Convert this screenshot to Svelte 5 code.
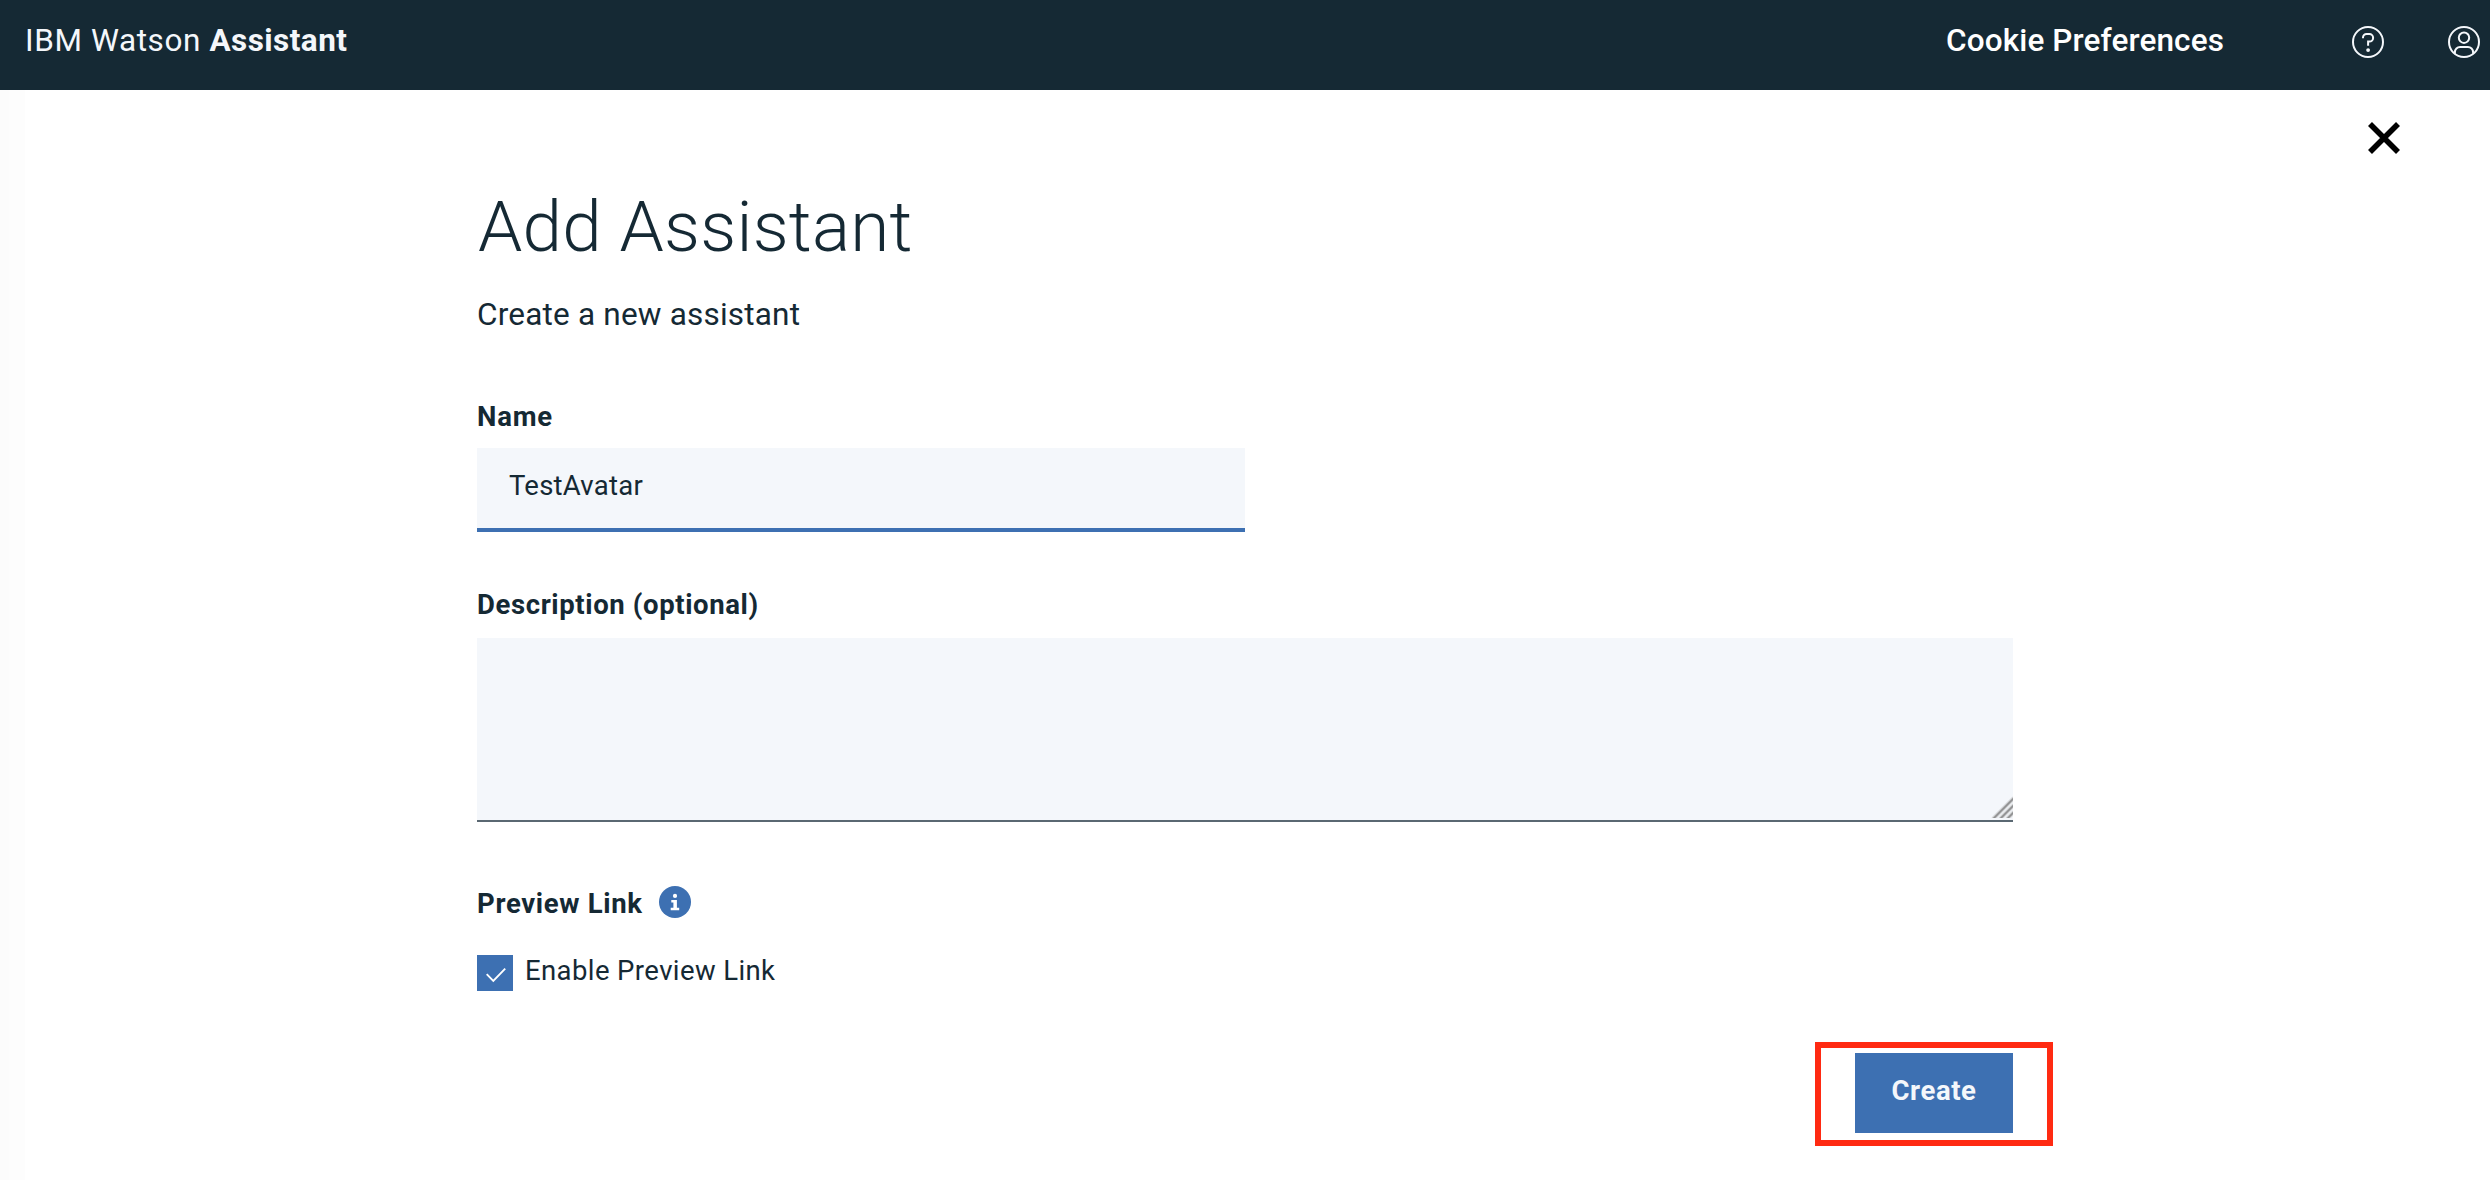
<script>
  let name = $state('TestAvatar');
  let description = $state('');
  let preview = $state(true);
</script>

<div class="page">
  <header>
    <div class="brand"><span class="vendor">IBM Watson&nbsp;</span><strong>Assistant</strong></div>
    <nav>
      <a class="cookies" href="#cookies">Cookie Preferences</a>
      <svg class="help" viewBox="0 0 32 32" width="32" height="32" fill="none" stroke="#f4f7fb" stroke-width="2">
        <circle cx="16" cy="16" r="15" />
        <path d="M11 12.3V11.6A3.6 3.6 0 0 1 14.6 8H17.4A3.7 3.7 0 0 1 21.1 11.7V11.9A3.7 3.7 0 0 1 17.4 15.6H16.1V19.8" />
        <circle cx="16.1" cy="24.1" r="1.9" fill="#f4f7fb" stroke="none" />
      </svg>
      <svg class="user" viewBox="0 0 32 32" width="32" height="32" fill="none" stroke="#f4f7fb" stroke-width="2">
        <circle cx="16" cy="16" r="15" />
        <circle cx="16" cy="11.7" r="5.2" />
        <path d="M6.9 27.8V26.2A5.2 5.2 0 0 1 12.1 21H19.9A5.2 5.2 0 0 1 25.1 26.2V27.8" />
      </svg>
    </nav>
  </header>

  <div class="body">
    <div class="rail"></div>
    <main>
      <div class="closebar">
        <button class="close" aria-label="Close">
          <svg viewBox="0 0 32 32" width="32" height="32" stroke="#000" stroke-width="5.6">
            <path d="M2 2L30 30M30 2L2 30" />
          </svg>
        </button>
      </div>

      <form onsubmit={(e) => e.preventDefault()}>
        <h1>Add Assistant</h1>
        <p class="sub">Create a new assistant</p>

        <label class="lbl" for="name">Name</label>
        <input id="name" class="text" type="text" bind:value={name} />

        <label class="lbl desc" for="description">Description (optional)</label>
        <div class="area">
          <textarea id="description" bind:value={description}></textarea>
          <svg class="grip" viewBox="0 0 22 22" width="22" height="22" fill="none">
            <path d="M2 23L23 2M9 23L23 9M16 23L23 16" stroke="#d2d3d5" stroke-width="4" />
            <path d="M2 23L23 2M9 23L23 9M16 23L23 16" stroke="#8f9091" stroke-width="1.7" />
          </svg>
        </div>

        <div class="heading">
          <span class="lbl link">Preview Link</span>
          <svg viewBox="0 0 32 32" width="32" height="32">
            <circle cx="16" cy="16" r="16" fill="#3d70b2" />
            <circle cx="16" cy="9.9" r="2.1" fill="#fff" />
            <path d="M12.3 14H17.9V21.8H20.2V24.2H11.7V21.8H14.4V16.4H12.3Z" fill="#fff" />
          </svg>
        </div>

        <button type="button" class="check" role="checkbox" aria-checked={preview} onclick={() => (preview = !preview)}>
          <span class="box">
            {#if preview}
              <svg viewBox="0 0 36 36" width="36" height="36" fill="none" stroke="#fff" stroke-width="1.9">
                <path d="M9.7 19.2L16.3 25.9L28.2 13.7" />
              </svg>
            {/if}
          </span>
          <span class="checklabel">Enable Preview Link</span>
        </button>

        <div class="actions">
          <div class="highlight"><button class="create">Create</button></div>
        </div>
      </form>
    </main>
  </div>
</div>

<style>
  :global(body) {
    overflow: hidden;
    background: #fff;
  }
  .page {
    height: 1180px;
    display: flex;
    flex-direction: column;
    font-family: Roboto, "Liberation Sans", sans-serif;
    font-size: 27.5px;
    color: #152934;
  }
  header {
    height: 90px;
    flex: none;
    box-sizing: border-box;
    padding: 0 10px 0 25px;
    display: flex;
    justify-content: space-between;
    align-items: flex-start;
    background: #152934;
    color: #f4f7fb;
    font-size: 31.5px;
    line-height: 82px;
  }
  .brand {
    display: flex;
    white-space: nowrap;
  }
  .vendor {
    letter-spacing: 0.6px;
  }
  .brand strong {
    font-weight: 700;
    letter-spacing: 0.45px;
  }
  nav {
    display: flex;
    align-items: flex-start;
  }
  .cookies {
    color: #fff;
    text-decoration: none;
    font-weight: 500;
    letter-spacing: 0.13px;
    margin-right: 128px;
  }
  .help,
  .user {
    margin-top: 26px;
  }
  .user {
    margin-left: 64px;
  }
  .body {
    flex: 1;
    display: flex;
  }
  .rail {
    width: 25px;
    background: linear-gradient(to right, #fcfcfc 9px, #fdfdfd 9px);
  }
  main {
    flex: 1;
  }
  .closebar {
    display: flex;
    justify-content: flex-end;
    padding: 32px 90px 0 0;
  }
  button {
    border: 0;
    padding: 0;
    background: none;
    font: inherit;
    color: inherit;
  }
  .close {
    display: flex;
  }
  form {
    width: 1536px;
    margin: 33px 0 0 452px;
    display: flex;
    flex-direction: column;
  }
  h1 {
    margin: 0;
    padding-left: 1px;
    font-size: 71px;
    font-weight: 300;
    line-height: 80px;
    letter-spacing: 0.22px;
  }
  .sub {
    margin: 28px 0 0;
    font-size: 31.5px;
    line-height: 40px;
    letter-spacing: 0.2px;
  }
  .lbl {
    margin-top: 62px;
    line-height: 40px;
    font-weight: 700;
    letter-spacing: 0.8px;
  }
  .text {
    width: 768px;
    height: 84px;
    box-sizing: border-box;
    margin-top: 11px;
    padding: 0 32px 6px;
    border: 0;
    border-bottom: 4px solid #3d70b2;
    border-radius: 0;
    background: #f4f7fb;
    color: inherit;
    font: inherit;
    letter-spacing: 0.25px;
    outline: none;
  }
  .desc {
    margin-top: 53px;
    letter-spacing: 0.62px;
  }
  .area {
    position: relative;
    margin-top: 13px;
    height: 184px;
    display: flex;
  }
  textarea {
    flex: 1;
    box-sizing: border-box;
    padding: 28px 32px;
    border: 0;
    border-bottom: 2px solid #5a6872;
    border-radius: 0;
    background: #f4f7fb;
    resize: none;
    outline: none;
    font: inherit;
    color: inherit;
  }
  .grip {
    position: absolute;
    right: 0;
    bottom: 4px;
  }
  .heading {
    margin-top: 62px;
    display: flex;
    align-items: flex-start;
  }
  .heading svg {
    margin-top: 2px;
  }
  .link {
    width: 182px;
    margin-top: 0;
    letter-spacing: 0.68px;
  }
  .check {
    margin-top: 26px;
    display: flex;
    gap: 12px;
    text-align: left;
  }
  .box {
    width: 36px;
    height: 36px;
    margin-top: 5px;
    background: #3d70b2;
  }
  .box svg {
    display: block;
  }
  .checklabel {
    height: 41px;
    line-height: 42px;
    letter-spacing: 0.4px;
  }
  .actions {
    margin-top: 62px;
    display: flex;
    justify-content: flex-end;
  }
  .highlight {
    position: relative;
    display: flex;
  }
  .highlight::after {
    content: '';
    position: absolute;
    inset: -11px -40px -13px;
    border: 6px solid #ff2a12;
    pointer-events: none;
  }
  .create {
    width: 158px;
    height: 80px;
    padding-bottom: 6px;
    background: #3d70b2;
    color: #f4f7fb;
    font-weight: 700;
    letter-spacing: 0.6px;
  }
</style>
